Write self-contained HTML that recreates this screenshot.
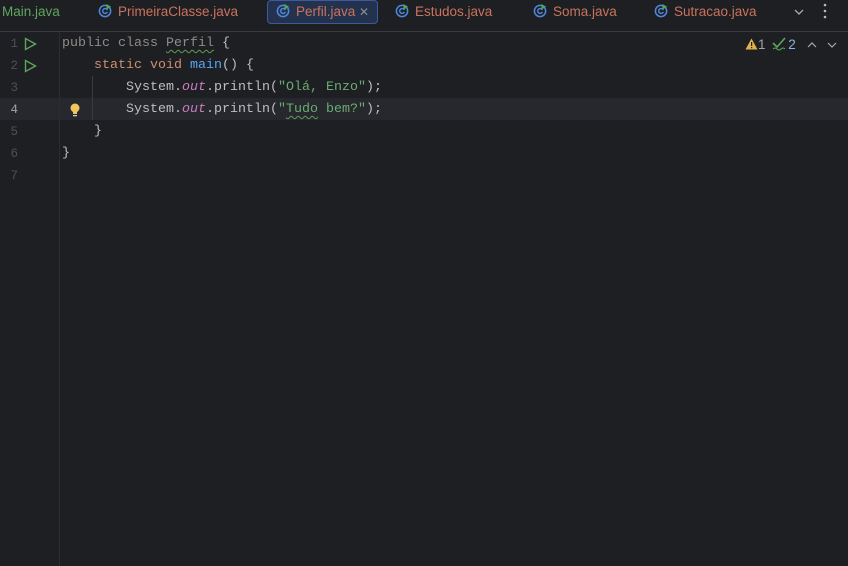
<!DOCTYPE html><html><head><style>
body{margin:0;width:848px;height:566px;background:#1e1f22;overflow:hidden;font-family:"Liberation Sans",sans-serif;position:relative}
.tabs{position:absolute;top:0;left:0;width:848px;height:31px;border-bottom:1px solid #393b40}
.tab{position:absolute;top:0;height:24px;line-height:24px;font-size:13.5px;color:#c9735e;white-space:nowrap}
.ic{display:inline-block;vertical-align:middle;margin-right:5px;margin-top:-3px}
.act{top:0;height:22px;border:1px solid #3d5aa0;background:#25324d;border-radius:4px;padding:0 8px;line-height:22px}
.code{position:absolute;left:62px;top:33px;font-family:"Liberation Mono",monospace;font-size:13.33px;color:#bcbec4}
.l{height:22px;line-height:22px;white-space:pre}
.num{position:absolute;left:0;width:18px;text-align:right;font-family:"Liberation Mono",monospace;font-size:12.5px;color:#4b5059;height:22px;line-height:22px}
.k{color:#cf8e6d}.g{color:#8f8a85}.s{color:#6aab73}.m{color:#56a8f5}.o{color:#c77dbb;font-style:italic}
.w{text-decoration:underline wavy #5e9c55;text-underline-offset:3px;text-decoration-thickness:1px}
</style></head><body>
<div class="tabs">
<div class="tab" style="left:2px;color:#5fa55f">Main.java</div>
<div class="tab" style="left:98px"><svg class="ic" width="15" height="15" viewBox="0 0 16 16"><circle cx="7.5" cy="8.5" r="6" fill="none" stroke="#4d88e0" stroke-width="1.6"/><path d="M10 7.5a2.6 2.6 0 1 0 0 2" fill="none" stroke="#4d88e0" stroke-width="1.5"/><path d="M9 1v6l5-3z" fill="#4fa55a"/></svg>PrimeiraClasse.java</div>
<div class="tab act" style="left:267px"><svg class="ic" width="15" height="15" viewBox="0 0 16 16"><circle cx="7.5" cy="8.5" r="6" fill="none" stroke="#4d88e0" stroke-width="1.6"/><path d="M10 7.5a2.6 2.6 0 1 0 0 2" fill="none" stroke="#4d88e0" stroke-width="1.5"/><path d="M9 1v6l5-3z" fill="#4fa55a"/></svg>Perfil.java <span style="color:#8a8d94;font-size:12px">✕</span></div>
<div class="tab" style="left:395px"><svg class="ic" width="15" height="15" viewBox="0 0 16 16"><circle cx="7.5" cy="8.5" r="6" fill="none" stroke="#4d88e0" stroke-width="1.6"/><path d="M10 7.5a2.6 2.6 0 1 0 0 2" fill="none" stroke="#4d88e0" stroke-width="1.5"/><path d="M9 1v6l5-3z" fill="#4fa55a"/></svg>Estudos.java</div>
<div class="tab" style="left:533px"><svg class="ic" width="15" height="15" viewBox="0 0 16 16"><circle cx="7.5" cy="8.5" r="6" fill="none" stroke="#4d88e0" stroke-width="1.6"/><path d="M10 7.5a2.6 2.6 0 1 0 0 2" fill="none" stroke="#4d88e0" stroke-width="1.5"/><path d="M9 1v6l5-3z" fill="#4fa55a"/></svg>Soma.java</div>
<div class="tab" style="left:654px"><svg class="ic" width="15" height="15" viewBox="0 0 16 16"><circle cx="7.5" cy="8.5" r="6" fill="none" stroke="#4d88e0" stroke-width="1.6"/><path d="M10 7.5a2.6 2.6 0 1 0 0 2" fill="none" stroke="#4d88e0" stroke-width="1.5"/><path d="M9 1v6l5-3z" fill="#4fa55a"/></svg>Sutracao.java</div>
<svg style="position:absolute;left:793px;top:6px" width="12" height="12" viewBox="0 0 12 12"><path d="M2 4l4 4 4-4" fill="none" stroke="#aaa" stroke-width="1.3"/></svg>
<svg style="position:absolute;left:823px;top:3px" width="4" height="16"><circle cx="2" cy="2" r="1.3" fill="#bbb"/><circle cx="2" cy="8" r="1.3" fill="#bbb"/><circle cx="2" cy="14" r="1.3" fill="#bbb"/></svg>
</div>
<div style="position:absolute;left:0;top:98px;width:848px;height:22px;background:#26282e"></div>
<div style="position:absolute;left:59px;top:32px;width:1px;height:534px;background:#2b2d30"></div>
<div style="position:absolute;left:92px;top:76px;width:1px;height:44px;background:#393b40"></div>
<div class="num" style="top:33px">1</div><div class="num" style="top:55px">2</div><div class="num" style="top:77px">3</div><div class="num" style="top:99px;color:#a1a3ab">4</div><div class="num" style="top:121px">5</div><div class="num" style="top:143px">6</div><div class="num" style="top:165px">7</div>
<svg style="position:absolute;left:24px;top:37px" width="13" height="14"><path d="M1.5 1.5v11l10-5.5z" fill="none" stroke="#5fa55f" stroke-width="1.4"/></svg>
<svg style="position:absolute;left:24px;top:59px" width="13" height="14"><path d="M1.5 1.5v11l10-5.5z" fill="none" stroke="#5fa55f" stroke-width="1.4"/></svg>
<svg style="position:absolute;left:69px;top:102px" width="12" height="16"><circle cx="6" cy="6" r="4.5" fill="#f2c55c"/><rect x="4" y="10" width="4" height="2" fill="#f2c55c"/><rect x="4" y="13" width="4" height="1.3" fill="#ccc"/></svg>
<div class="code">
<div class="l"><span class="g">public class </span><span class="g w">Perfil</span> {</div>
<div class="l">    <span class="k">static void </span><span class="m">main</span>() {</div>
<div class="l">        System.<span class="o">out</span>.println(<span class="s">"Olá, Enzo"</span>);</div>
<div class="l">        System.<span class="o">out</span>.println(<span class="s">"<span class="w">Tudo</span> bem?"</span>);</div>
<div class="l">    }</div>
<div class="l">}</div>
</div>
<div style="position:absolute;left:745px;top:37px;font-size:13.5px;color:#a1a3ab;white-space:nowrap">
<svg width="13" height="12" style="vertical-align:-1px"><path d="M6.5 0.5L12.5 11.5H0.5z" fill="#e0b04a"/><rect x="6" y="4" width="1.2" height="4" fill="#1e1f22"/><rect x="6" y="9" width="1.2" height="1.2" fill="#1e1f22"/></svg>1
<svg width="16" height="14" style="vertical-align:-2px;margin-left:3px"><path d="M1 6l4 4 8-9" fill="none" stroke="#5fa55f" stroke-width="1.6"/><path d="M1 12q2-2 4 0t4 0 4 0" fill="none" stroke="#5fa55f" stroke-width="1"/></svg><span style="color:#8ab4e8">2</span>
</div>
<svg style="position:absolute;left:806px;top:40px" width="12" height="10"><path d="M2 7l4-4 4 4" fill="none" stroke="#aaa" stroke-width="1.2"/></svg>
<svg style="position:absolute;left:826px;top:40px" width="12" height="10"><path d="M2 3l4 4 4-4" fill="none" stroke="#aaa" stroke-width="1.2"/></svg>
</body></html>
